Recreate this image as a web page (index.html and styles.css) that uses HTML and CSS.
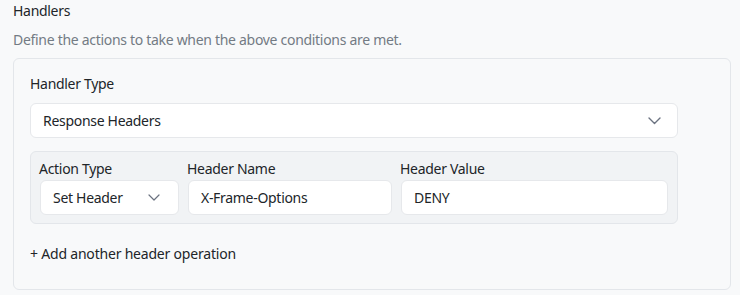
FILE: index.html
```html
<!DOCTYPE html>
<html>
<head>
<meta charset="utf-8">
<link rel="stylesheet" href="styles.css">
</head>
<body>
  <div class="section">
    <div class="title">Handlers</div>
    <div class="desc">Define the actions to take when the above conditions are met.</div>
    <div class="card">
      <div class="content">
        <div class="label">Handler Type</div>
        <div class="control select-main">
          <span>Response Headers</span>
          <svg class="chev" width="13" height="8" viewBox="0 0 13 8"><path d="M1 1l5.5 5.5 5.5-5.5" fill="none" stroke="#6b7280" stroke-width="1.4" stroke-linecap="round" stroke-linejoin="round"/></svg>
        </div>
        <div class="group">
          <div class="field">
            <div class="label">Action Type</div>
            <div class="control">
              <span>Set Header</span>
              <svg class="chev" width="12" height="7" viewBox="0 0 12 7"><path d="M1 1l5 5 5-5" fill="none" stroke="#6b7280" stroke-width="1.2" stroke-linecap="round" stroke-linejoin="round"/></svg>
            </div>
          </div>
          <div class="field">
            <div class="label">Header Name</div>
            <div class="control"><span>X-Frame-Options</span></div>
          </div>
          <div class="field">
            <div class="label">Header Value</div>
            <div class="control"><span>DENY</span></div>
          </div>
        </div>
        <div class="add">+ Add another header operation</div>
      </div>
    </div>
  </div>
</body>
</html>
```
FILE: styles.css
```css
html, body {
  margin: 0;
  padding: 0;
  background: #f8f9fa;
}
body {
  font-family: "Noto Sans", "Open Sans", sans-serif;
  font-size: 14px;
  letter-spacing: -0.3px;
  color: #212529;
}
.section {
  padding: 1px 9px 0 13px;
}
.title {
  line-height: 20px;
  color: #212529;
}
.desc {
  margin-top: 9px;
  line-height: 20px;
  color: #737b84;
}
.card {
  margin-top: 8px;
  border: 1px solid #e3e6ea;
  border-radius: 6px;
  background: #f8f9fa;
  padding: 15px 16px 24px 16px;
  box-sizing: border-box;
  height: 232px;
}
.content {
  width: 648px;
}
.label {
  line-height: 20px;
  color: #212529;
}
.control {
  height: 35px;
  box-sizing: border-box;
  background: #fff;
  border: 1px solid #e6e8eb;
  border-radius: 6px;
  display: flex;
  align-items: center;
  justify-content: space-between;
  padding: 0 16px 0 12px;
  color: #212529;
}
.select-main {
  margin-top: 9px;
  padding-left: 12px;
  padding-right: 16px;
}
.group {
  margin-top: 13px;
  background: #f1f3f5;
  border: 1px solid #e3e6ea;
  border-radius: 6px;
  padding: 7px 9px 8px 9px;
  display: grid;
  grid-template-columns: 139px 204px 1fr;
  gap: 9px;
}
.group .label {
  margin-left: -1px;
  margin-bottom: 1px;
}
.group .control {
  padding-right: 18px;
}
.add {
  margin-top: 20px;
  line-height: 20px;
  color: #212529;
  letter-spacing: -0.2px;
}
```
